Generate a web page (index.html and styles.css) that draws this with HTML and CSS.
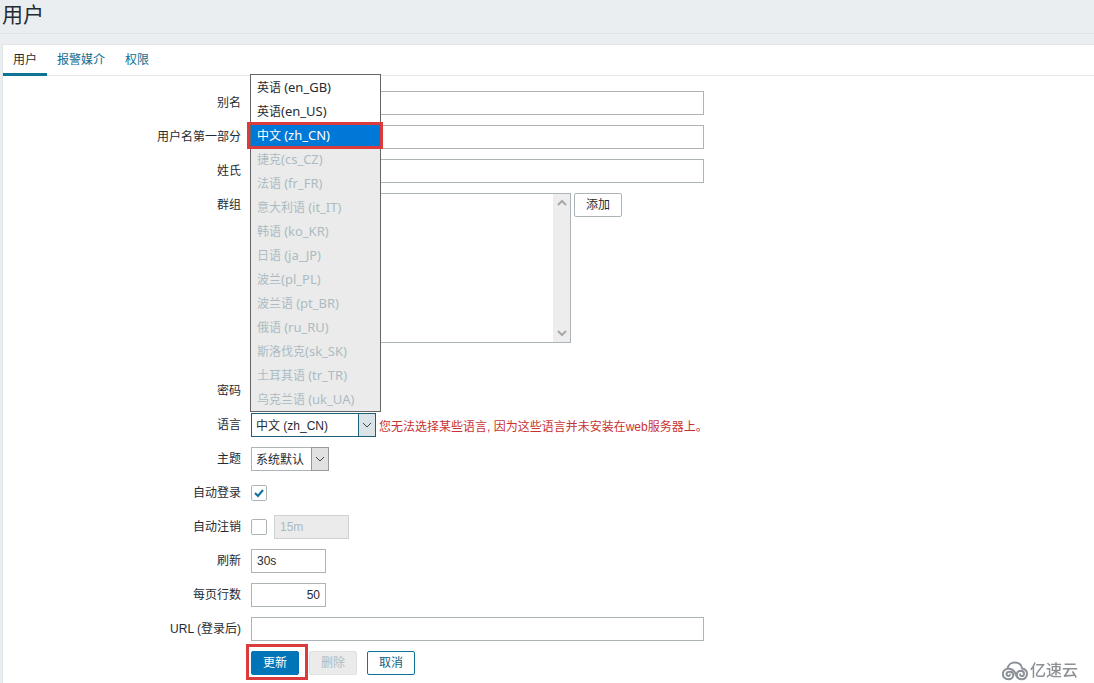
FILE: index.html
```html
<!DOCTYPE html>
<html lang="zh-CN">
<head>
<meta charset="utf-8">
<title>用户</title>
<link rel="stylesheet" href="styles.css">
</head>
<body>
<header class="page-header"><h1 class="page-title">用户</h1></header>
<main class="panel">
  <nav class="tabs">
    <a class="tab tab-active" href="#user">用户</a>
    <a class="tab" href="#media">报警媒介</a>
    <a class="tab" href="#permissions">权限</a>
  </nav>
  <form class="form" id="user">
    <label class="label" for="alias">别名</label>
    <div class="field"><input class="input input-wide" id="alias" type="text"></div>

    <label class="label" for="name">用户名第一部分</label>
    <div class="field"><input class="input input-wide" id="name" type="text"></div>

    <label class="label" for="surname">姓氏</label>
    <div class="field"><input class="input input-wide" id="surname" type="text"></div>

    <label class="label" for="groups">群组</label>
    <div class="field field-groups">
      <div class="listbox">
        <select class="listbox-select" id="groups" multiple></select>
        <div class="track">
          <svg class="track-arrow" viewBox="0 0 10 8"><path d="M1 6 5 2 9 6"/></svg>
          <svg class="track-arrow" viewBox="0 0 10 8"><path d="M1 2 5 6 9 2"/></svg>
        </div>
      </div>
      <button class="button button-plain" type="button">添加</button>
    </div>

    <span class="label">密码</span>
    <div class="field"></div>

    <label class="label" for="lang">语言</label>
    <div class="field field-lang">
      <div class="dropdown dropdown-open">
        <select class="select" id="lang"><option>中文 (zh_CN)</option></select>
        <span class="dropdown-arrow"><svg viewBox="0 0 10 8"><path d="M1 2 5 6 9 2"/></svg></span>
        <ul class="menu" role="listbox" aria-label="语言">
          <li class="option" role="option">英语 <span class="code">(en_GB)</span></li>
          <li class="option" role="option">英语<span class="code">(en_US)</span></li>
          <li class="option option-selected" role="option" aria-selected="true">中文 <span class="code">(zh_CN)</span></li>
          <li class="option option-disabled" role="option" aria-disabled="true">捷克<span class="code">(cs_CZ)</span></li>
          <li class="option option-disabled" role="option" aria-disabled="true">法语 <span class="code">(fr_FR)</span></li>
          <li class="option option-disabled" role="option" aria-disabled="true">意大利语 <span class="code">(it_IT)</span></li>
          <li class="option option-disabled" role="option" aria-disabled="true">韩语 <span class="code">(ko_KR)</span></li>
          <li class="option option-disabled" role="option" aria-disabled="true">日语 <span class="code">(ja_JP)</span></li>
          <li class="option option-disabled" role="option" aria-disabled="true">波兰<span class="code">(pl_PL)</span></li>
          <li class="option option-disabled" role="option" aria-disabled="true">波兰语 <span class="code">(pt_BR)</span></li>
          <li class="option option-disabled" role="option" aria-disabled="true">俄语 <span class="code">(ru_RU)</span></li>
          <li class="option option-disabled" role="option" aria-disabled="true">斯洛伐克<span class="code">(sk_SK)</span></li>
          <li class="option option-disabled" role="option" aria-disabled="true">土耳其语 <span class="code">(tr_TR)</span></li>
          <li class="option option-disabled" role="option" aria-disabled="true">乌克兰语 <span class="code">(uk_UA)</span></li>
        </ul>
      </div>
      <span class="warning">您无法选择某些语言, 因为这些语言并未安装在web服务器上。</span>
    </div>

    <label class="label" for="theme">主题</label>
    <div class="field">
      <div class="dropdown dropdown-theme">
        <select class="select" id="theme"><option>系统默认</option></select>
        <span class="dropdown-arrow"><svg viewBox="0 0 10 8"><path d="M1 2 5 6 9 2"/></svg></span>
      </div>
    </div>

    <label class="label" for="autologin">自动登录</label>
    <div class="field">
      <span class="check">
        <input class="checkbox" id="autologin" type="checkbox" checked>
        <svg class="check-mark" viewBox="0 0 16 16"><path d="M4 8 7 11 12 5"/></svg>
      </span>
    </div>

    <label class="label" for="autologout">自动注销</label>
    <div class="field field-logout">
      <input class="checkbox" id="autologout" type="checkbox">
      <input class="input input-small" type="text" value="15m" aria-label="自动注销" disabled>
    </div>

    <label class="label" for="refresh">刷新</label>
    <div class="field"><input class="input input-small" id="refresh" type="text" value="30s"></div>

    <label class="label" for="rows">每页行数</label>
    <div class="field"><input class="input input-small input-number" id="rows" type="text" value="50"></div>

    <label class="label" for="url">URL (登录后)</label>
    <div class="field"><input class="input input-wide" id="url" type="text"></div>

    <div class="field actions">
      <span class="marked"><button class="button button-primary" type="submit">更新</button></span>
      <button class="button button-disabled" type="button" disabled>删除</button>
      <button class="button button-outline" type="button">取消</button>
    </div>
  </form>
</main>
<div class="watermark">
  <svg class="watermark-logo" viewBox="0 0 26 20"><path d="M5.500 7.800C6 4 9 1.500 12.800 1.500S19.500 4 20.300 7.600C23 8.200 25 10.300 25 13A5.200 5.200 0 0 1 19.800 18.300C16 18.300 14.800 16 14.800 13.500A4 4 0 0 1 18.500 9.800C20.500 9.800 22 11.200 22 13S20.500 15.300 19.300 15S17.800 13.300 18.800 12.800"/><path d="M16 17C14 15.500 14 13 12.500 10.800C11 8.500 8.500 7.500 6 7.800A5.200 5.200 0 0 0 6.200 18.300C9.500 18.300 11.300 16.200 11.300 14A3.600 3.600 0 0 0 7.500 10.800C5.800 10.800 4.500 11.800 4.500 13.200S6 15.300 7 14.800S8 13.500 7.300 13.200"/></svg>
  <span>亿速云</span>
</div>
</body>
</html>
```
FILE: styles.css
```css
* { box-sizing: border-box; }

body {
  margin: 0;
  min-height: 100vh;
  display: flex;
  flex-direction: column;
  background: #ebeef0;
  color: #1f2c33;
  font-family: "Liberation Sans", "Noto Sans CJK SC", sans-serif;
  font-size: 12px;
  line-height: 16px;
}

input, select, button { font: inherit; color: inherit; margin: 0; }

.page-header {
  height: 34px;
  padding-left: 2px;
  border-bottom: 1px solid #dfe4e7;
}

.page-title {
  margin: 0;
  font-size: 21px;
  font-weight: 400;
  line-height: 30px;
}

.panel {
  flex: 1;
  margin: 10px 0 0 2px;
  background: #fff;
  border: 1px solid #dfe4e7;
  border-width: 1px 0 0 1px;
}

.tabs { display: flex; border-bottom: 1px solid #e4e8ea; }

.tab {
  height: 30px;
  padding: 0 10px;
  line-height: 30px;
  color: #0b6e93;
  text-decoration: none;
}

.tab-active {
  height: 31px;
  margin-bottom: -1px;
  color: #1f2c33;
  border-bottom: 3px solid #0f7396;
}

.form {
  display: grid;
  grid-template-columns: 238px 1fr;
  gap: 10px;
  padding: 15px 0 8px;
}

.label { text-align: right; line-height: 24px; }

.field { display: flex; align-items: center; min-height: 24px; }

.input {
  height: 24px;
  padding: 0 5px;
  border: 1px solid #acb4b8;
  background: #fff;
}

.input-wide { width: 453px; }
.input-small { width: 75px; }
.input-number { text-align: right; }

.input:disabled {
  background: #ebebeb;
  border-color: #cdd2d5;
  color: #acbbc2;
}

.field-groups { align-items: flex-start; gap: 3px; padding-bottom: 26px; }

.listbox {
  display: flex;
  width: 320px;
  height: 150px;
  border: 1px solid #acb4b8;
}

.listbox-select { flex: 1; border: 0; background: #fff; overflow: hidden; }

.track {
  display: flex;
  flex-direction: column;
  justify-content: space-between;
  align-items: center;
  width: 17px;
  padding: 5px 0;
  background: #ededed;
}

.track-arrow { width: 10px; height: 8px; fill: none; stroke: #a8a8a8; stroke-width: 2; }

.button {
  width: 48px;
  height: 24px;
  padding: 0;
  border: 1px solid;
  border-radius: 2px;
  text-align: center;
}

.button-plain { background: #fff; border-color: #acb4b8; }
.button-primary { background: #0275b8; border-color: #0275b8; color: #fff; }
.button-disabled { background: #ebebeb; border-color: #dfe2e4; color: #acbbc2; }
.button-outline { background: #fff; border-color: #0f7396; color: #0b6285; }

.actions { grid-column: 2; gap: 10px; }

.marked { position: relative; display: flex; }

.marked::after {
  content: "";
  position: absolute;
  inset: -7px -9px -5px -5px;
  border: 3px solid #da3b3d;
  pointer-events: none;
}

.field-lang { gap: 3px; }

.dropdown { position: relative; height: 24px; width: 125px; }
.dropdown-theme { width: 78px; }

.select {
  width: 100%;
  height: 24px;
  padding: 2px 4px 0;
  border: 1px solid #acb4b8;
  border-radius: 0;
  background: #fff;
  appearance: none;
}

.dropdown-open .select { border-color: #1e5f78; }

.dropdown-arrow {
  position: absolute;
  top: 0;
  right: 0;
  display: grid;
  place-items: center;
  width: 18px;
  height: 24px;
  border: 1px solid #999;
  background: #e1e1e1;
  pointer-events: none;
}

.dropdown-open .dropdown-arrow { background: #d9e3e8; border-color: #1e5f78; }
.dropdown-arrow svg { width: 10px; height: 8px; fill: none; stroke: #444; stroke-width: 1; }

.menu {
  position: absolute;
  left: -1px;
  bottom: 25px;
  z-index: 1;
  width: 131px;
  margin: 0;
  padding: 0;
  list-style: none;
  border: 1px solid #646464;
  background: #fff;
  font-family: "Noto Sans", "Noto Sans CJK SC", sans-serif;
}

.option { height: 24px; padding: 1px 0 0 6px; line-height: 24px; white-space: nowrap; }
.option-disabled { background: #ebebeb; color: #acbbc2; }
.code { font-size: 13px; line-height: 16px; }

.option-selected {
  position: relative;
  background: #0078d7;
  color: #fff;
}

.option-selected::after {
  content: "";
  position: absolute;
  inset: -1px -3px -2px -4px;
  border: 3px solid #da3b3d;
}

.warning { color: #c83232; padding-top: 3px; }

.check { position: relative; display: flex; }

.checkbox {
  width: 16px;
  height: 16px;
  border: 1px solid #acb4b8;
  border-radius: 2px;
  background: #fff;
  appearance: none;
}

.check-mark {
  position: absolute;
  inset: 0;
  width: 16px;
  height: 16px;
  fill: none;
  stroke: #0b7099;
  stroke-width: 2;
  pointer-events: none;
}

.field-logout { gap: 7px; }

.watermark {
  position: fixed;
  right: 16px;
  bottom: 0;
  display: flex;
  align-items: center;
  gap: 2px;
  color: #8b9197;
  font-size: 16px;
  font-weight: 500;
  line-height: 24px;
}

.watermark-logo { width: 26px; height: 20px; fill: none; stroke: #8b9197; stroke-width: 2; }
```
